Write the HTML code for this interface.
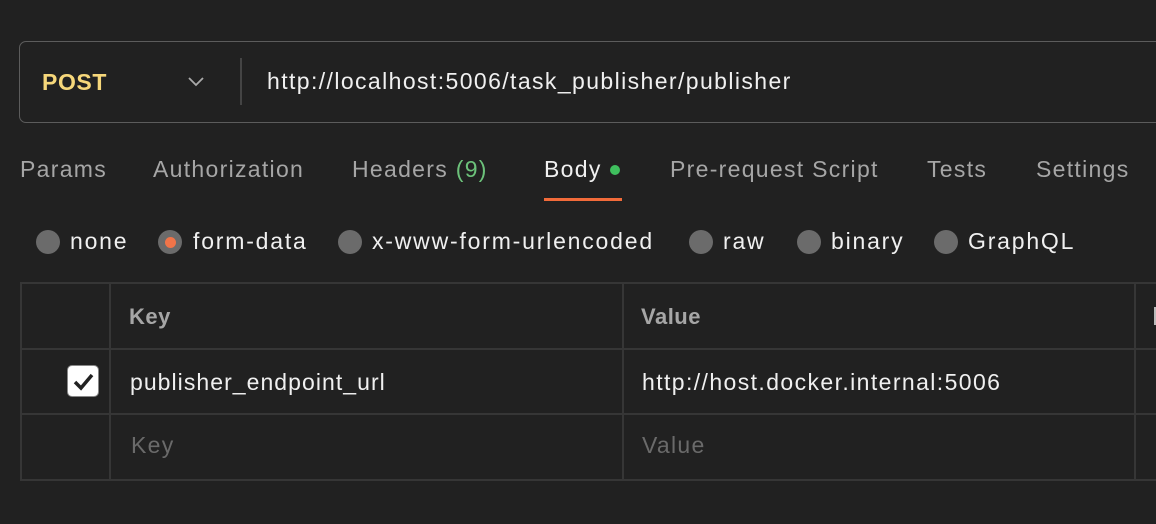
<!DOCTYPE html>
<html><head><style>
body{margin:0;width:1156px;height:524px;background:#212121;font-family:"Liberation Sans",sans-serif;overflow:hidden;position:relative;color:#fff;letter-spacing:1.3px}
.a{position:absolute;white-space:nowrap}
.box{position:absolute;left:19px;top:41px;width:1160px;height:80px;border:1px solid #5c5c5c;border-radius:7px}
.tab{position:absolute;top:156px;font-size:23px;color:#a6a6a6;white-space:nowrap}
.rad{position:absolute;top:230px;width:24px;height:24px;border-radius:50%;background:#6b6b6b}
.rl{position:absolute;top:228px;font-size:23px;color:#f0f0f0;letter-spacing:1.8px;white-space:nowrap}
.h{position:absolute;background:#363636;height:2px}
.v{position:absolute;background:#363636;width:2px;top:283px;height:198px}
</style></head><body>
<div class="box"></div>
<div class="a" style="left:42px;top:69px;font-size:23px;font-weight:bold;color:#f6d77a;letter-spacing:0.6px">POST</div>
<svg class="a" style="left:187px;top:75px" width="18" height="12"><path d="M2 3l7 7 7-7" stroke="#aaa" stroke-width="1.8" fill="none"/></svg>
<div class="a" style="left:240px;top:58px;width:2px;height:47px;background:#444"></div>
<div class="a" style="left:267px;top:68px;font-size:23px;color:#f0f0f0;letter-spacing:1.4px">http://localhost:5006/task_publisher/publisher</div>
<div class="tab" style="left:20px">Params</div>
<div class="tab" style="left:153px">Authorization</div>
<div class="tab" style="left:352px">Headers <span style="color:#6cc17a">(9)</span></div>
<div class="tab" style="left:544px;color:#f0f0f0">Body</div>
<div class="a" style="left:610px;top:165px;width:10px;height:10px;border-radius:50%;background:#3fbf5e"></div>
<div class="a" style="left:544px;top:198px;width:78px;height:3px;background:#f26b3a"></div>
<div class="tab" style="left:670px">Pre-request Script</div>
<div class="tab" style="left:927px">Tests</div>
<div class="tab" style="left:1036px">Settings</div>
<div class="rad" style="left:36px"></div><div class="rl" style="left:70px">none</div>
<div class="rad" style="left:158px"></div><div class="a" style="left:165px;top:237px;width:11px;height:11px;border-radius:50%;background:#f07449"></div><div class="rl" style="left:193px">form-data</div>
<div class="rad" style="left:338px"></div><div class="rl" style="left:372px">x-www-form-urlencoded</div>
<div class="rad" style="left:689px"></div><div class="rl" style="left:723px">raw</div>
<div class="rad" style="left:797px"></div><div class="rl" style="left:831px">binary</div>
<div class="rad" style="left:934px"></div><div class="rl" style="left:968px">GraphQL</div>
<div class="h" style="left:20px;top:282px;width:1140px"></div>
<div class="h" style="left:20px;top:348px;width:1140px"></div>
<div class="h" style="left:20px;top:413px;width:1140px"></div>
<div class="h" style="left:20px;top:479px;width:1140px"></div>
<div class="v" style="left:20px"></div><div class="v" style="left:109px"></div><div class="v" style="left:622px"></div><div class="v" style="left:1134px"></div>
<div class="a" style="left:1154px;top:307px;width:2px;height:18px;background:#bbb"></div>
<div class="a" style="left:129px;top:304px;font-size:22px;font-weight:bold;color:#a6a6a6;letter-spacing:0.5px">Key</div>
<div class="a" style="left:641px;top:304px;font-size:22px;font-weight:bold;color:#a6a6a6;letter-spacing:0.5px">Value</div>
<div class="a" style="left:67px;top:365px;width:32px;height:32px;border-radius:5px;background:#fff;border:1px solid #888;box-sizing:border-box"></div>
<svg class="a" style="left:67px;top:365px" width="32" height="32"><path d="M8 17l6 6 11-13" stroke="#222" stroke-width="3.5" fill="none"/></svg>
<div class="a" style="left:130px;top:369px;font-size:23px;color:#f0f0f0;letter-spacing:1.05px">publisher_endpoint_url</div>
<div class="a" style="left:642px;top:369px;font-size:23px;color:#f0f0f0;letter-spacing:1.4px">http://host.docker.internal:5006</div>
<div class="a" style="left:131px;top:432px;font-size:23px;color:#6a6a6a">Key</div>
<div class="a" style="left:642px;top:432px;font-size:23px;color:#6a6a6a">Value</div>
</body></html>
